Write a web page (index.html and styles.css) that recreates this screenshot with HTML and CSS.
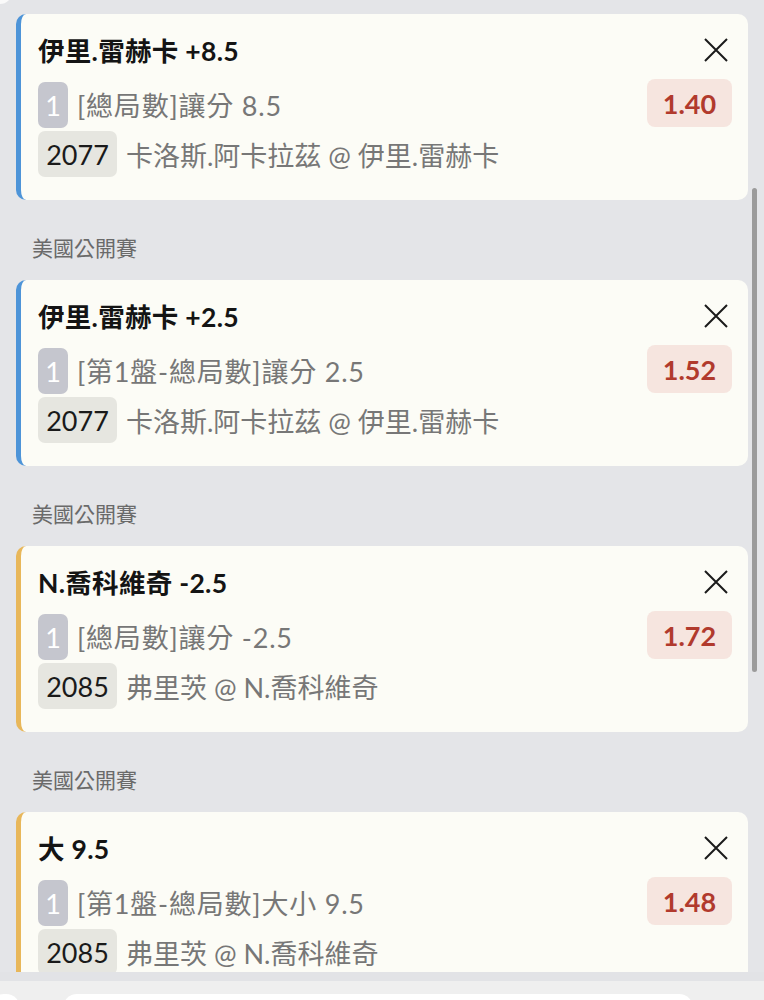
FILE: index.html
```html
<!DOCTYPE html>
<html lang="zh-Hant">
<head>
<meta charset="utf-8">
<link rel="stylesheet" href="styles.css">
</head>
<body>
<main class="list">
  <div class="top-edge"></div>

  <section class="bet bet--blue">
    <div class="row row-title">
      <span class="title">伊里.雷赫卡 +8.5</span>
      <svg class="close" viewBox="0 0 24 24" width="24" height="24"><path d="M1 1L23 23M23 1L1 23" stroke="#1a1a1a" stroke-width="2" fill="none"/></svg>
    </div>
    <div class="row row-market">
      <span class="chip chip-leg">1</span>
      <span class="market">[總局數]讓分 8.5</span>
      <span class="odds">1.40</span>
    </div>
    <div class="row row-event">
      <span class="chip chip-code">2077</span>
      <span class="event">卡洛斯.阿卡拉茲 @ 伊里.雷赫卡</span>
    </div>
  </section>

  <div class="league">美國公開賽</div>

  <section class="bet bet--blue">
    <div class="row row-title">
      <span class="title">伊里.雷赫卡 +2.5</span>
      <svg class="close" viewBox="0 0 24 24" width="24" height="24"><path d="M1 1L23 23M23 1L1 23" stroke="#1a1a1a" stroke-width="2" fill="none"/></svg>
    </div>
    <div class="row row-market">
      <span class="chip chip-leg">1</span>
      <span class="market">[第1盤-總局數]讓分 2.5</span>
      <span class="odds">1.52</span>
    </div>
    <div class="row row-event">
      <span class="chip chip-code">2077</span>
      <span class="event">卡洛斯.阿卡拉茲 @ 伊里.雷赫卡</span>
    </div>
  </section>

  <div class="league">美國公開賽</div>

  <section class="bet bet--yellow">
    <div class="row row-title">
      <span class="title">N.喬科維奇 -2.5</span>
      <svg class="close" viewBox="0 0 24 24" width="24" height="24"><path d="M1 1L23 23M23 1L1 23" stroke="#1a1a1a" stroke-width="2" fill="none"/></svg>
    </div>
    <div class="row row-market">
      <span class="chip chip-leg">1</span>
      <span class="market">[總局數]讓分 -2.5</span>
      <span class="odds">1.72</span>
    </div>
    <div class="row row-event">
      <span class="chip chip-code">2085</span>
      <span class="event">弗里茨 @ N.喬科維奇</span>
    </div>
  </section>

  <div class="league">美國公開賽</div>

  <section class="bet bet--yellow">
    <div class="row row-title">
      <span class="title">大 9.5</span>
      <svg class="close" viewBox="0 0 24 24" width="24" height="24"><path d="M1 1L23 23M23 1L1 23" stroke="#1a1a1a" stroke-width="2" fill="none"/></svg>
    </div>
    <div class="row row-market">
      <span class="chip chip-leg">1</span>
      <span class="market">[第1盤-總局數]大小 9.5</span>
      <span class="odds">1.48</span>
    </div>
    <div class="row row-event">
      <span class="chip chip-code">2085</span>
      <span class="event">弗里茨 @ N.喬科維奇</span>
    </div>
  </section>

  <div class="scrollbar"></div>
</main>
<footer class="bottom">
  <div class="pill pill-small"></div>
  <div class="pill pill-wide"></div>
</footer>
</body>
</html>
```

FILE: styles.css
```css
* { box-sizing: border-box; }

html, body {
  margin: 0;
  padding: 0;
  background: #e4e5e8;
  font-family: Lato, "Noto Sans CJK TC", sans-serif;
}

.list {
  position: relative;
  height: 972px;
  overflow: hidden;
  padding: 14px 16px 0 16px;
}

.top-edge {
  position: absolute;
  left: -14px;
  top: -14px;
  width: 26px;
  height: 18px;
  border-radius: 0 0 12px 0;
  background: #fafafa;
}

.bet {
  background: #fcfcf6;
  border-radius: 10px;
  border-left: 5px solid #4d94d8;
  padding: 20px 20px 23px 17px;
  display: flex;
  flex-direction: column;
}

.bet--blue { border-left-color: #4d94d8; }
.bet--yellow { border-left-color: #e8b75a; }

.row {
  display: flex;
  align-items: center;
}

.row-title {
  height: 30px;
  justify-content: space-between;
  margin-bottom: 16px;
}

.title {
  font-size: 26.5px;
  font-weight: 700;
  color: #141414;
  letter-spacing: 0.3px;
}

.close {
  display: block;
  margin-top: 2px;
}

.row-market {
  height: 48px;
  margin-bottom: 3px;
}

.row-event {
  height: 46px;
}

.chip {
  display: flex;
  align-items: center;
  justify-content: center;
  height: 46px;
  border-radius: 7px;
  font-size: 27px;
  margin-right: 9px;
}

.chip-leg {
  width: 30px;
  background: #c5c6ce;
  color: #ffffff;
  align-self: flex-end;
}

.chip-code {
  width: 79px;
  background: #e6e6e0;
  color: #1a1a1a;
}

.market, .event {
  font-size: 27px;
  color: #777777;
}

.market {
  flex: 1;
  letter-spacing: 0.8px;
}

.odds {
  display: flex;
  align-items: center;
  justify-content: center;
  width: 85px;
  height: 48px;
  border-radius: 8px;
  background: #f6e5df;
  color: #b13a2d;
  font-size: 27px;
  font-weight: 700;
  margin-right: -4px;
  margin-top: -2px;
}

.league {
  height: 80px;
  padding: 36px 0 0 16px;
  font-size: 21px;
  line-height: 24px;
  color: #6a6a6a;
}

.scrollbar {
  position: absolute;
  left: 752px;
  top: 188px;
  width: 5px;
  height: 484px;
  border-radius: 3px;
  background: #9b9b9b;
}

.bottom {
  height: 28px;
  background: #efefef;
  border-top: 9px solid #e2e3e6;
  position: relative;
  overflow: hidden;
}

.pill {
  position: absolute;
  background: #ffffff;
  border-radius: 14px;
  top: 13px;
  height: 30px;
}

.pill-small { left: -10px; width: 30px; }
.pill-wide { left: 63px; width: 630px; }
```
